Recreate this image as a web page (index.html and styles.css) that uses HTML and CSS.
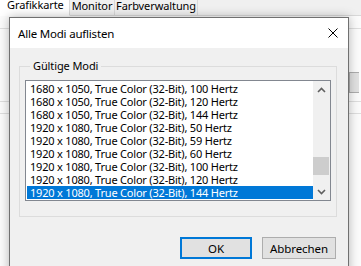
FILE: index.html
```html
<!DOCTYPE html>
<html lang="de">
<head>
  <meta charset="UTF-8" />
  <title>Alle Modi auflisten</title>
  <link rel="stylesheet" href="styles.css">
</head>
<body>
  <!-- Eigenschaften-Fenster im Hintergrund -->
  <div class="window">
    <div class="tabs">
      <span class="tab active">Grafikkarte</span>
      <span class="tab">Monitor</span>
      <span class="tab">Farbverwaltung</span>
      <span class="tab-fill"></span>
    </div>
    <div class="page">
      <div class="page-line"></div>
      <div class="page-row"><span class="bg-btn"></span></div>
      <div class="page-line"></div>
      <div class="page-line"></div>
    </div>
  </div>

  <!-- Dialog -->
  <div class="dialog">
    <div class="titlebar">
      <span class="title">Alle Modi auflisten</span>
      <svg class="close" width="10" height="10" viewBox="0 0 10 10">
        <path d="M0.5 0.5 L9.5 9.5 M9.5 0.5 L0.5 9.5" stroke="#000" stroke-width="1" fill="none"/>
      </svg>
    </div>
    <div class="dialog-body">
      <fieldset class="group">
        <legend>Gültige Modi</legend>
        <div class="listbox">
          <ul class="items" id="items"></ul>
          <div class="scrollbar">
            <div class="sb-btn">
              <svg width="9" height="6" viewBox="0 0 9 6"><path d="M1 5 L4.5 1.5 L8 5" stroke="#606060" stroke-width="1.6" fill="none"/></svg>
            </div>
            <div class="sb-track"><div class="sb-thumb"></div></div>
            <div class="sb-btn">
              <svg width="9" height="6" viewBox="0 0 9 6"><path d="M1 1 L4.5 4.5 L8 1" stroke="#606060" stroke-width="1.6" fill="none"/></svg>
            </div>
          </div>
        </div>
      </fieldset>
      <div class="buttons">
        <button class="btn default">OK</button>
        <button class="btn">Abbrechen</button>
      </div>
    </div>
  </div>

  <script>
    const modes = [
      ["1680 x 1050", 100], ["1680 x 1050", 120], ["1680 x 1050", 144],
      ["1920 x 1080", 50], ["1920 x 1080", 59], ["1920 x 1080", 60],
      ["1920 x 1080", 100], ["1920 x 1080", 120], ["1920 x 1080", 144]
    ];
    const list = document.getElementById("items");
    modes.forEach(([res, hz], i) => {
      const li = document.createElement("li");
      li.className = i === modes.length - 1 ? "item selected" : "item";
      li.textContent = `${res}, True Color (32-Bit), ${hz} Hertz`;
      list.appendChild(li);
    });
  </script>
</body>
</html>
```

FILE: styles.css
```css
*{margin:0;padding:0;box-sizing:border-box}
body{font-family:"Noto Sans","Open Sans",sans-serif;font-size:11px;letter-spacing:-0.1px;color:#000;background:#fff;width:361px;height:266px;overflow:hidden;position:relative}

.window{height:266px;background:#fbfbfb}
.tabs{display:flex;height:16px;background:#f0f0f0}
.tab{height:16px;line-height:12px;text-align:center;border:1px solid #d9d9d9;border-top:none;border-left:none;background:#f0f0f0;white-space:nowrap}
.tab.active{width:70px;background:#fff;border-bottom-color:#fff;text-align:left;padding-left:7px;line-height:10px}
.tab:nth-child(2){width:45px}
.tab:nth-child(3){width:83px}
.tab-fill{flex:1;border-bottom:1px solid #d9d9d9}
.page{padding-top:12px;display:flex;flex-direction:column}
.page-line{height:1px;background:#dedede}
.page-row{display:flex;justify-content:flex-end;padding:43px 0 8px}
.bg-btn{width:10px;height:21px;border:1px solid #adadad;border-right:none;background:#e1e1e1;margin-right:2px}
.page .page-line + .page-line{margin-top:11px}

.dialog{position:absolute;left:9px;top:17px;width:340px;height:260px;border:1px solid #707070;background:#f0f0f0;box-shadow:0 0 10px rgba(0,0,0,0.28)}
.titlebar{height:30px;background:#fff;display:flex;align-items:center;justify-content:space-between;padding:0 10px 0 8px}
.title{font-size:11.5px;letter-spacing:-0.2px;padding-top:1px}

.dialog-body{padding:11px 11px 0 9px}
.group{border:1px solid #dcdcdc;height:158px;padding:7px 5px 0 5px;min-width:0}
.group legend{padding:0 3px;margin-left:5px;line-height:14px}

.listbox{display:flex;height:121px;border:1px solid #828790;background:#fff;padding:1px 0 0 1px}
.items{list-style:none;flex:1;min-width:0}
.item{height:13px;line-height:13px;padding-left:3px;white-space:nowrap;overflow:hidden;letter-spacing:-0.2px}
.item.selected{background:#0078d7;color:#fff}

.scrollbar{width:17px;display:flex;flex-direction:column;background:#f0f0f0;margin-top:-1px}
.sb-btn{height:17px;display:flex;align-items:center;justify-content:center}
.sb-track{flex:1}
.sb-thumb{height:18px;margin:59px 1px 0 0;background:#cdcdcd}

.buttons{display:flex;justify-content:flex-end;gap:10px;padding:20px 1px 0 0}
.btn{height:22px;font-family:inherit;font-size:11.5px;letter-spacing:-0.1px;background:#e1e1e1;border:1px solid #adadad;color:#000}
.btn.default{width:72px;border:2px solid #0078d7}
.btn:not(.default){width:74px}
```
